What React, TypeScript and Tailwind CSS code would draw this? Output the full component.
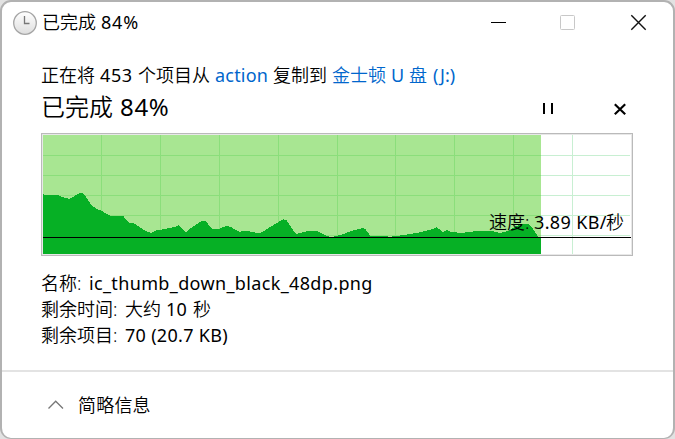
import { ReactNode } from 'react';

const CURVE =
  '43,194 45,194.7 57.3,194.7 62,197 69.3,198.7 73,197 78,194 81,192.7 83.5,193.7 86.7,198 91.7,205.3 96.7,209 101.3,210.7 110,215.7 123.3,216 128.3,222.3 134,223.3 145,230.7 151.3,233 157.3,230 163.3,229.3 176,226.7 178.3,225 185.7,232.3 190,228.7 200.7,221.7 204.3,220.7 206.7,222.3 211.7,228.7 218.3,229 226,226 230,226.7 239.3,231.7 246.7,231 258.3,233 261.7,232.3 271.7,226 283.3,219.3 286.7,220.3 291.7,228.3 296,234 308.3,231 316.7,231 327.3,236.3 332,237 343.3,234.3 350,231.3 363.3,228 365.3,229 370.7,236.3 383,236 390,236.7 401.7,235.3 420,232.3 434,228.7 436.7,227 442.7,232.3 446.7,230 451.7,232 461.7,233 476.7,231 490,230.7 500,233 508,231 520,224.3 529,224.3 531.7,227 537.3,235.7 539,237 541,238';

const COLUMNS = [101, 160, 219, 278, 337, 395, 454, 513, 572];
const ROWS = [155, 175, 195, 215, 235];

function Seg({ className = '', children }: { className?: string; children: ReactNode }) {
  return <span className={`inline-block shrink-0 whitespace-pre ${className}`}>{children}</span>;
}

function ClockIcon() {
  return (
    <svg className="size-6 shrink-0" viewBox="0 0 24 24" fill="none">
      <defs>
        <linearGradient id="face" x1="0" y1="0" x2="0" y2="1">
          <stop offset="0" stopColor="#ffffff" />
          <stop offset="1" stopColor="#dedede" />
        </linearGradient>
      </defs>
      <circle cx="12" cy="12" r="11.3" fill="url(#face)" stroke="#a5a5a5" strokeWidth="1.3" />
      <path d="M11.5 5V12.5H16.5" stroke="#777777" strokeWidth="1.3" />
    </svg>
  );
}

function SpeedChart() {
  return (
    <div className="relative ml-[39px] h-[123px] w-[592px] shrink-0">
      <svg className="block h-full w-full" viewBox="41 133 592 123" shapeRendering="crispEdges">
        <rect x="41" y="133" width="592" height="123" fill="#bababa" />
        <rect x="42" y="134" width="590" height="121" fill="#e8e8e8" />
        <rect x="43" y="135" width="588" height="119" fill="#ffffff" />
        <rect x="43" y="135" width="498" height="119" fill="#a8e692" />
        {ROWS.map((y) => (
          <g key={y}>
            <rect x="43" y={y} width="498" height="1" fill="#8bde7b" />
            <rect x="541" y={y} width="89" height="1" fill="#c8efd2" />
          </g>
        ))}
        {COLUMNS.map((x) => (
          <rect key={x} x={x} y="135" width="1" height="119" fill={x < 541 ? '#8bde7b' : '#c8efd2'} />
        ))}
        <polygon points={`43,254 ${CURVE} 541,254`} fill="#06b025" />
        <rect x="43" y="237" width="588" height="1" fill="#000000" />
      </svg>
      <div className="absolute top-[76px] right-[9px] flex h-[26px] items-center">
        <Seg className="w-[45px]">速度:</Seg>
        <Seg className="w-[72px] font-normal tracking-[0.35px]">3.89 KB/</Seg>
        <Seg className="w-[18px]">秒</Seg>
      </div>
    </div>
  );
}

export default function App() {
  return (
    <div className="h-[439px] w-[675px] overflow-hidden bg-[#e2e2e2] font-['Noto_Sans','Noto_Sans_CJK_SC',sans-serif] text-[18px] leading-[26px] font-[350] text-black">
      <div className="flex h-full w-full flex-col rounded-[11px] border-2 border-b border-[#b2b2b2] bg-white">
        <header className="flex h-[42px] shrink-0 items-center pl-[11px]">
          <ClockIcon />
          <div className="flex pb-[2px]">
            <Seg className="ml-[5px] w-[59px]">已完成</Seg>
            <Seg className="font-normal tracking-[0.8px]">84%</Seg>
          </div>
          <svg className="ml-auto h-[42px] w-[184px]" viewBox="489 2 184 42" fill="none">
            <path d="M491 22.5H506" stroke="#000" />
            <rect x="560.5" y="15.5" width="14" height="14" rx="1" stroke="#c8c8c8" />
            <path d="M631.3 15.3L645.7 29.7M645.7 15.3L631.3 29.7" stroke="#111" strokeWidth="1.4" />
          </svg>
        </header>

        <div className="mt-[18px] flex h-[26px] shrink-0 items-center pl-[39px]">
          <Seg className="w-[59px]">正在将</Seg>
          <Seg className="w-[38px] font-normal tracking-[0.6px]">453</Seg>
          <Seg className="w-[77px]">个项目从</Seg>
          <Seg className="w-[58px] font-normal tracking-[0.2px] text-[#0066cc]">action</Seg>
          <Seg className="w-[59px]">复制到</Seg>
          <Seg className="w-[59px] text-[#0066cc]">金士顿</Seg>
          <Seg className="w-[18px] font-normal text-[#0066cc]">U</Seg>
          <Seg className="w-[24px] text-[#0066cc]">盘</Seg>
          <Seg className="font-normal text-[#0066cc]">(J:)</Seg>
        </div>

        <div className="flex h-[45px] shrink-0 items-start pl-[39px] text-[24px] leading-[36px]">
          <Seg className="w-[79px] pt-px">已完成</Seg>
          <Seg className="pt-px font-normal tracking-[0.7px]">84%</Seg>
          <svg className="ml-auto h-[36px] w-[133px]" viewBox="540 88 133 36" fill="none">
            <path d="M544 103V114M552 103V114" stroke="#000" strokeWidth="2" />
            <path d="M614.8 104.3L625.2 114.2M625.2 104.3L614.8 114.2" stroke="#000" strokeWidth="2.2" />
          </svg>
        </div>

        <SpeedChart />

        <div className="flex h-[114px] shrink-0 flex-col pt-[14px] pl-[39px]">
          <div className="flex h-[26px] items-center">
            <Seg className="w-[48px]">名称:</Seg>
            <Seg className="font-normal tracking-[0.36px]">ic_thumb_down_black_48dp.png</Seg>
          </div>
          <div className="flex h-[26px] items-center">
            <Seg className="w-[84px]">剩余时间:</Seg>
            <Seg className="w-[41px]">大约</Seg>
            <Seg className="w-[27px] font-normal tracking-[0.3px]">10</Seg>
            <Seg>秒</Seg>
          </div>
          <div className="flex h-[26px] items-center">
            <Seg className="w-[84px]">剩余项目:</Seg>
            <Seg className="font-normal tracking-[0.3px]">70 (20.7 KB)</Seg>
          </div>
        </div>

        <footer className="flex flex-1 items-center border-t-2 border-[#e3e3e3] pl-[45px]">
          <svg className="h-[12px] w-[18px]" viewBox="0 0 18 12" fill="none">
            <path d="M1.5 9.5L8.7 2.2L16 9.5" stroke="#777777" strokeWidth="1.3" />
          </svg>
          <Seg className="ml-[13px] tracking-[0.2px]">简略信息</Seg>
        </footer>
      </div>
    </div>
  );
}
